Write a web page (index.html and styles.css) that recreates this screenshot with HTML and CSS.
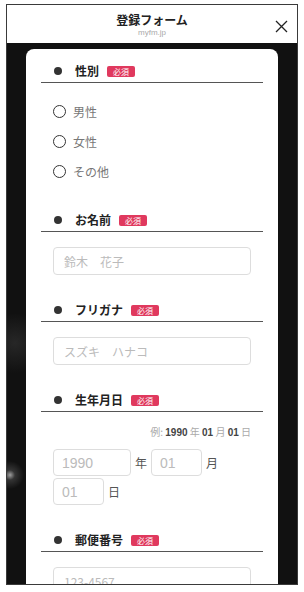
FILE: index.html
```html
<!DOCTYPE html>
<html lang="ja">
<head>
	<meta charset="UTF-8">
	<meta name="viewport" content="width=device-width, initial-scale=1.0">
	<title>登録フォーム</title>
	<link rel="stylesheet" href="styles.css">
</head>
<body>
	<div class="frame">

		<header class="header">
			<div class="title">登録フォーム</div>
			<div class="domain">myfm.jp</div>
			<span class="close">
				<svg width="13" height="13" viewBox="0 0 13 13">
					<path d="M1 1 L12 12 M12 1 L1 12" stroke="#222" stroke-width="1.3" fill="none"/>
				</svg>
			</span>
		</header>

		<div class="stage">
			<form class="card">

				<div class="field">
					<div class="field-head">
						<span class="dot"></span>
						<span class="label">性別</span>
						<span class="badge">必須</span>
					</div>
					<div class="field-body radios">
						<label class="radio"><span class="circle"></span>男性</label>
						<label class="radio"><span class="circle"></span>女性</label>
						<label class="radio"><span class="circle"></span>その他</label>
					</div>
				</div>

				<div class="field">
					<div class="field-head">
						<span class="dot"></span>
						<span class="label">お名前</span>
						<span class="badge">必須</span>
					</div>
					<div class="field-body">
						<input class="text" type="text" placeholder="鈴木　花子">
					</div>
				</div>

				<div class="field">
					<div class="field-head">
						<span class="dot"></span>
						<span class="label">フリガナ</span>
						<span class="badge">必須</span>
					</div>
					<div class="field-body">
						<input class="text" type="text" placeholder="スズキ　ハナコ">
					</div>
				</div>

				<div class="field">
					<div class="field-head">
						<span class="dot"></span>
						<span class="label">生年月日</span>
						<span class="badge">必須</span>
					</div>
					<div class="field-body">
						<div class="example">
							例: <b>1990</b> 年 <b>01</b> 月 <b>01</b> 日
						</div>
						<div class="date">
							<span class="date-part"><input class="text year" type="text" placeholder="1990">年</span>
							<span class="date-part"><input class="text small" type="text" placeholder="01">月</span>
							<span class="date-part"><input class="text small" type="text" placeholder="01">日</span>
						</div>
					</div>
				</div>

				<div class="field">
					<div class="field-head">
						<span class="dot"></span>
						<span class="label">郵便番号</span>
						<span class="badge">必須</span>
					</div>
					<div class="field-body">
						<input class="text" type="text" placeholder="123-4567">
					</div>
				</div>

			</form>
		</div>

	</div>
</body>
</html>
```

FILE: styles.css
```css
* {
	box-sizing: border-box;
}

body {
	margin: 0;
	background: #fff;
	font-family: "Noto Sans CJK JP", "Noto Sans", sans-serif;
	color: #222;
}

.frame {
	margin: 4px 6px 0;
	height: 581px;
	border: 1px solid #3a3a3a;
	overflow: hidden;
	display: flex;
	flex-direction: column;
}

.header {
	position: relative;
	height: 38px;
	padding-top: 7px;
	background: #fff;
	text-align: center;
	flex-shrink: 0;
}

.title {
	font-size: 12px;
	line-height: 16px;
	font-weight: bold;
}

.domain {
	font-family: "Liberation Sans", sans-serif;
	font-size: 8px;
	line-height: 10px;
	color: #aaa;
}

.close {
	position: absolute;
	top: 15px;
	right: 9px;
	width: 13px;
	height: 13px;
}

.close svg {
	display: block;
}

.stage {
	flex: 1;
	padding: 6px 19px 0;
	background:
		radial-gradient(circle at 3px 432px, rgba(255, 255, 255, 0.6) 0, rgba(255, 255, 255, 0.15) 5px, transparent 14px),
		radial-gradient(circle at 8px 300px, rgba(80, 80, 80, 0.35) 0, transparent 30px),
		#111;
}

.card {
	height: 100%;
	padding: 11px 15px 0;
	border-radius: 8px 8px 0 0;
	background: #fff;
}

.field + .field {
	margin-top: 24px;
}

.field-head {
	display: flex;
	align-items: center;
	height: 23px;
	padding-left: 13px;
	border-bottom: 1px solid #555;
}

.dot {
	width: 8px;
	height: 8px;
	border-radius: 50%;
	background: #333;
}

.label {
	margin-left: 13px;
	font-size: 12px;
	font-weight: bold;
	line-height: 16px;
}

.badge {
	margin-left: 8px;
	width: 28px;
	height: 11px;
	border-radius: 2px;
	background: #e0395e;
	color: #fff;
	font-size: 8px;
	line-height: 11px;
	text-align: center;
}

.field-body {
	padding: 15px 12px 0;
}

.radios {
	padding-top: 13px;
	margin-bottom: -1px;
}

.radio {
	display: flex;
	align-items: center;
	height: 30px;
	font-size: 12px;
	color: #777;
}

.circle {
	width: 13px;
	height: 13px;
	margin-right: 7px;
	border: 1.6px solid #333;
	border-radius: 50%;
}

.text {
	display: block;
	width: 100%;
	height: 28px;
	padding: 0 10px;
	border: 1px solid #ddd;
	border-radius: 4px;
	font-family: "Noto Sans CJK JP", "Noto Sans", sans-serif;
	font-size: 12px;
	color: #333;
	outline: none;
}

.text::placeholder {
	color: #bbb;
}

.example {
	margin-top: -2px;
	margin-bottom: 9px;
	text-align: right;
	font-size: 10px;
	line-height: 14px;
	color: #aaa;
}

.example b {
	font-family: "Liberation Sans", sans-serif;
	color: #444;
}

.date {
	display: flex;
	flex-wrap: wrap;
	column-gap: 4px;
	row-gap: 2px;
}

.date-part {
	display: inline-flex;
	align-items: center;
	gap: 4px;
	font-size: 12px;
	color: #555;
}

.date .text {
	height: 27px;
	padding: 0 8px;
	font-family: "Liberation Sans", sans-serif;
	font-size: 14px;
}

.year {
	width: 78px !important;
}

.small {
	width: 51px !important;
}
```
